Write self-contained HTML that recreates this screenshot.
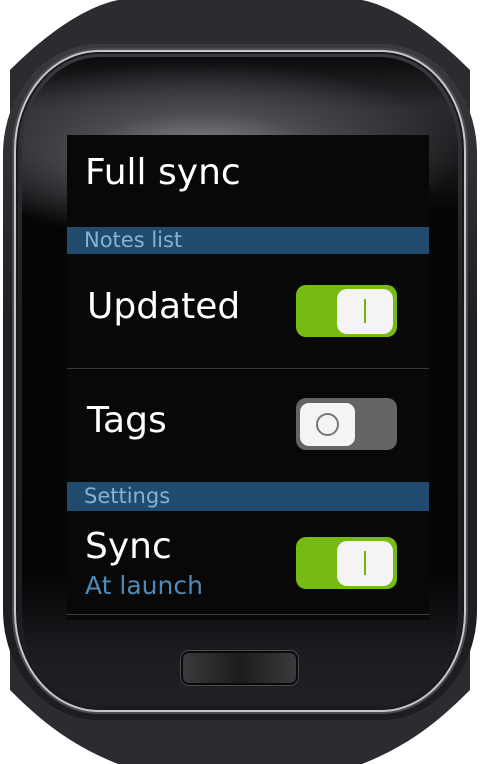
<!DOCTYPE html>
<html><head><style>
*{margin:0;padding:0;box-sizing:border-box}
body{width:480px;height:764px;background:#fff;position:relative;overflow:hidden;font-family:"Liberation Sans","DejaVu Sans",sans-serif}
.a{position:absolute}
.band{left:0;top:0;width:480px;height:764px}
.body{left:3px;top:44px;width:474px;height:676px;border-radius:95px/110px;background:linear-gradient(#3a3b3f,#1e1f22 40%,#1d1e21);}
.rim{left:14px;top:50px;width:452px;height:662px;border-radius:85px/100px;border:2px solid #c4c7cb;box-shadow:0 0 0 2px #4a4c50, inset 0 0 0 2px #1a1a1c}
.glass{left:22px;top:57px;width:436px;height:648px;border-radius:78px/92px;background:radial-gradient(ellipse 260px 90px at 180px 95px,#8a8b8e 0%,#4a4b4f 45%,rgba(20,20,22,0) 100%),linear-gradient(180deg,#0b0b0d 0%,#2a2b2e 8%,#1a1a1c 16%,#050506 24%,#050506 80%,#1b1c1f 92%,#202124 100%)}
.scr{left:67px;top:135px;width:362px;height:485px;background:#080808}
.t{color:#fff;font-family:"DejaVu Sans","Liberation Sans",sans-serif}
.hdr{left:67px;width:362px;background:#204b6e;color:#7fb3d8;font-family:"DejaVu Sans",sans-serif;font-size:21px;padding-left:17px}
.div{left:67px;width:362px;height:1px;background:#3a3a3a}
.on{width:101px;height:52px;background:#76ba14;border-radius:10px}
.on .k{left:41px;top:4px;width:56px;height:45px;border-radius:10px;background:#f4f4f4}
.on .k:after{content:"";position:absolute;left:27px;top:10px;width:2px;height:24px;background:#6fb313}
.off{width:101px;height:52px;background:#646464;border-radius:10px}
.off .k{left:4px;top:5px;width:55px;height:43px;border-radius:9px;background:#f4f4f4}
.off .k:after{content:"";position:absolute;left:16px;top:10px;width:23px;height:23px;border-radius:50%;border:2px solid #777;box-sizing:border-box}
</style></head><body>
<svg class="a band" width="480" height="764"><path d="M118 0 H362 C400 8 440 40 470 70 V690 C440 720 410 745 362 764 H118 C70 745 40 720 10 690 V70 C40 40 80 8 118 0Z" fill="#2b2c30"/></svg>
<div class="a body"></div>
<div class="a rim"></div>
<div class="a glass"></div>
<div class="a scr"></div>
<div class="a t" style="left:85px;top:152px;font-size:36px">Full sync</div>
<div class="a hdr" style="top:227px;height:27px;line-height:27px">Notes list</div>
<div class="a t" style="left:87px;top:286px;font-size:36px">Updated</div>
<div class="a on" style="left:296px;top:285px"><div class="a k"></div></div>
<div class="a div" style="top:368px"></div>
<div class="a t" style="left:87px;top:400px;font-size:36px">Tags</div>
<div class="a off" style="left:296px;top:398px"><div class="a k"></div></div>
<div class="a hdr" style="top:482px;height:29px;line-height:29px">Settings</div>
<div class="a t" style="left:85px;top:526px;font-size:36px">Sync</div>
<div class="a" style="left:85px;top:571px;font-size:25px;color:#4d8ab8;font-family:'DejaVu Sans',sans-serif">At launch</div>
<div class="a on" style="left:296px;top:537px"><div class="a k"></div></div>
<div class="a div" style="top:614px"></div>
<div class="a" style="left:181px;top:651px;width:117px;height:34px;border-radius:8px;background:linear-gradient(90deg,#3a3a3c,#1c1c1e 50%,#3a3a3c);border:2px solid #0a0a0a;box-shadow:0 0 0 1px #4a4a4c"></div>
<div class="a" style="left:100px;top:648px;width:16px;height:16px;border-radius:50%;background:#1c1c1f"></div>
<div class="a" style="left:362px;top:648px;width:16px;height:16px;border-radius:50%;background:#1c1c1f"></div>
</body></html>
